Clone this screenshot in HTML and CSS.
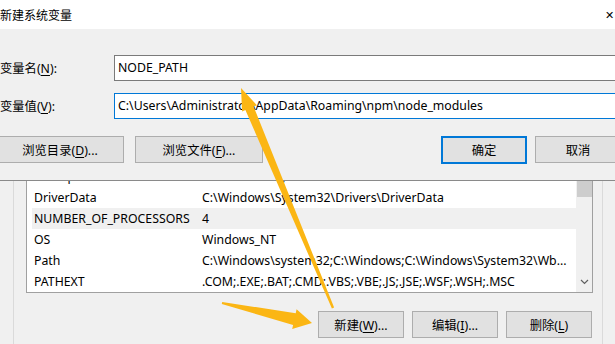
FILE: index.html
```html
<!DOCTYPE html>
<html lang="zh-CN">
<head>
  <meta charset="UTF-8" />
  <title>新建系统变量</title>
  <link rel="stylesheet" href="styles.css">
</head>
<body>

<div class="screen">

  <!-- background window: system variables list -->
  <div class="panel">
    <div class="list">
      <div class="rows">
        <div class="row"><span class="name">ComSpec</span><span class="value">C:\Windows\system32\cmd.exe</span></div>
        <div class="row"><span class="name">DriverData</span><span class="value">C:\Windows\System32\Drivers\DriverData</span></div>
        <div class="row selected"><span class="name">NUMBER_OF_PROCESSORS</span><span class="value">4</span></div>
        <div class="row"><span class="name">OS</span><span class="value">Windows_NT</span></div>
        <div class="row"><span class="name">Path</span><span class="value">C:\Windows\system32;C:\Windows;C:\Windows\System32\Wb...</span></div>
        <div class="row"><span class="name">PATHEXT</span><span class="value">.COM;.EXE;.BAT;.CMD;.VBS;.VBE;.JS;.JSE;.WSF;.WSH;.MSC</span></div>
      </div>
      <div class="scrollbar">
        <div class="thumb"></div>
        <svg class="chevron" width="9" height="6" viewBox="0 0 9 6"><path d="M1 1 L4.5 4.5 L8 1" fill="none" stroke="#606060" stroke-width="1.2"/></svg>
      </div>
    </div>
    <div class="list-actions">
      <button class="btn">新建(<u>W</u>)...</button>
      <button class="btn">编辑(<u>I</u>)...</button>
      <button class="btn">删除(<u>L</u>)</button>
    </div>
  </div>

  <!-- dialog on top -->
  <div class="dialog">
    <div class="titlebar">
      <span class="title">新建系统变量</span>
      <span class="close">✕</span>
    </div>
    <div class="dialog-body">
      <div class="field">
        <label>变量名(<u>N</u>):</label>
        <div class="input">NODE_PATH</div>
      </div>
      <div class="field">
        <label>变量值(<u>V</u>):</label>
        <div class="input focused">C:\Users\Administrator\AppData\Roaming\npm\node_modules</div>
      </div>
      <div class="dialog-actions">
        <button class="btn wide">浏览目录(<u>D</u>)...</button>
        <button class="btn wide">浏览文件(<u>F</u>)...</button>
        <span class="spacer"></span>
        <button class="btn default">确定</button>
        <button class="btn">取消</button>
      </div>
    </div>
  </div>

  <!-- annotation arrows -->
  <svg class="arrows" width="615" height="344" viewBox="0 0 615 344">
    <polygon fill="#fbb614" points="241,88 256.9,105.2 253.6,106.6 334.1,307.5 331.9,308.5 245.4,110 242.1,111.4"/>
    <polygon fill="#fbb614" points="312,323 296.6,309.3 295.7,313.2 222.2,302 221.8,304 293.1,325 292.2,328.9"/>
  </svg>

</div>

</body>
</html>
```

FILE: styles.css
```css
body { margin: 0; background: #f0f0f0; font-family: "Noto Sans", "Noto Sans CJK SC", sans-serif; font-size: 12.3px; color: #000; overflow: hidden; }
.screen { position: relative; width: 615px; height: 344px; overflow: hidden; }

.panel { margin-left: 13px; width: 590px; height: 344px; box-sizing: border-box; border-left: 1px solid #dadada; border-right: 1px solid #dadada; padding-top: 165px; }
.list { margin-left: 12px; width: 567px; height: 128px; box-sizing: border-box; border: 1px solid #a0a0a0; background: #fff; display: flex; }
.rows { flex: 1; padding-left: 5px; }
.row { display: flex; height: 21px; line-height: 21px; white-space: nowrap; }
.row.selected { background: #f0f0f0; }
.name { width: 168px; padding-left: 2px; }
.value { flex: 1; }
.scrollbar { width: 16px; background: #f0f0f0; display: flex; flex-direction: column; align-items: center; justify-content: space-between; }
.thumb { width: 15px; height: 31px; background: #cdcdcd; }
.chevron { margin-bottom: 7px; }

.list-actions { display: flex; justify-content: flex-end; gap: 8px; margin-top: 18px; width: 578px; }

.btn { font: inherit; width: 86px; height: 27px; padding: 0; background: #e1e1e1; border: 1px solid #adadad; color: #000; }
.btn u { text-underline-offset: 2px; }
.btn.wide { width: 128px; }
.btn.default { border: 2px solid #0078d7; height: 28px; }

.dialog { position: absolute; top: 0; left: -4px; width: 640px; background: #f0f0f0; border-bottom: 1px solid #8a8a8a; }
.titlebar { height: 29px; background: #fff; display: flex; align-items: center; justify-content: space-between; padding-right: 22px; }
.title { font-size: 12px; margin-left: 4px; }
.close { font-size: 11px; }
.dialog-body { padding: 26px 0 16px 0; }
.field { display: flex; align-items: center; margin-bottom: 12px; }
.field label { width: 118px; box-sizing: border-box; padding-left: 4px; }
.field u { text-underline-offset: 2px; }
.input { flex: 1; height: 26px; box-sizing: border-box; line-height: 24px; padding-left: 3px; background: #fff; border: 1px solid #7a7a7a; white-space: nowrap; }
.input.focused { border-color: #0078d7; }
.dialog-actions { display: flex; align-items: flex-start; gap: 8px; margin-top: 17px; }
.dialog-actions .wide + .wide { margin-left: 3px; }
.spacer { flex: 1; }
.dialog-actions .btn:last-child { margin-right: 15px; }

.arrows { position: absolute; top: 0; left: 0; pointer-events: none; }
```
